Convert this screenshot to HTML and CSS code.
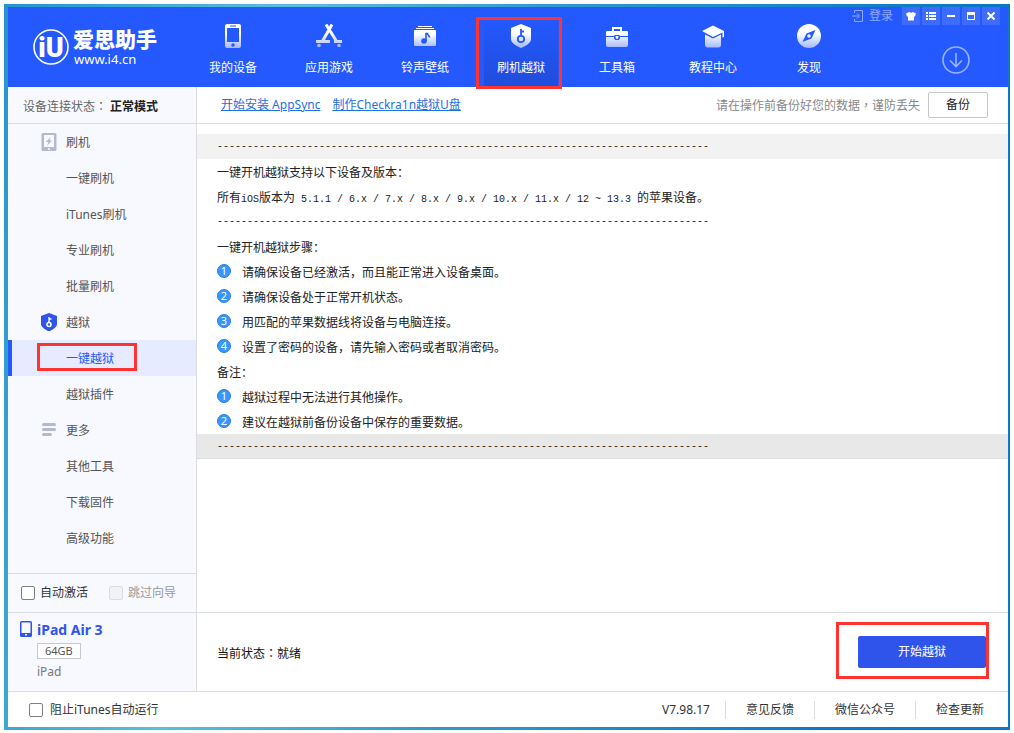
FILE: index.html
```html
<!DOCTYPE html>
<html lang="zh-CN">
<head>
<meta charset="utf-8">
<title>爱思助手</title>
<link rel="stylesheet" href="styles.css">
</head>
<body>
<svg class="defs" width="0" height="0" aria-hidden="true">
  <defs>
    <linearGradient id="fade" gradientUnits="userSpaceOnUse" x1="0" y1="0" x2="0" y2="24">
      <stop offset="0.4" stop-color="#fff"/><stop offset="1" stop-color="#a3b8ff"/>
    </linearGradient>
  </defs>
</svg>
<div class="window">
  <header class="header">
    <div class="brand">
      <svg class="brand-mark" width="36" height="36" viewBox="0 0 36 36" aria-hidden="true">
        <circle cx="18" cy="18" r="17" fill="none" stroke="#fff" stroke-width="1.6"/>
        <text x="18" y="28" text-anchor="middle" class="brand-letters">iU</text>
      </svg>
      <div class="brand-text">
        <span class="brand-name">爱思助手</span>
        <span class="brand-url">www.i4.cn</span>
      </div>
    </div>
    <nav class="tabs">
      <a class="tab" href="#"><svg width="24" height="24" viewBox="0 0 24 24"><path fill="url(#fade)" fill-rule="evenodd" d="M6 0h12a2 2 0 0 1 2 2v20a2 2 0 0 1-2 2H6a2 2 0 0 1-2-2V2a2 2 0 0 1 2-2zM6 4v14h12V4zM9 1.500h6v1H9zM12 19.200a1.800 1.800 0 1 0 0 3.600a1.800 1.800 0 0 0 0-3.600z"/></svg>我的设备</a>
      <a class="tab" href="#"><svg width="28" height="24" viewBox="0 0 28 24"><g fill="none" stroke="url(#fade)" stroke-width="3"><path d="M11 0.500 22 18M17 0.500 7 18"/><path d="M1 17.500h14M19 17.500h8" stroke-width="3.200"/></g><circle cx="4" cy="21.500" r="1.800" fill="#a3b8ff"/><circle cx="24" cy="21.500" r="1.800" fill="#a3b8ff"/></svg>应用游戏</a>
      <a class="tab" href="#"><svg width="24" height="24" viewBox="0 0 24 24"><path fill="#fff" d="M5 2h14v1H5zM3 4h18v1H3z"/><path fill="url(#fade)" d="M2 6h20a1 1 0 0 1 1 1v14a1 1 0 0 1-1 1H2a1 1 0 0 1-1-1V7a1 1 0 0 1 1-1z"/><circle cx="11" cy="17" r="2.800" fill="#2459ff"/><path d="M13 17V9.500h1.500c0 2 2 2 2 4" fill="none" stroke="#2459ff" stroke-width="1.600"/></svg>铃声壁纸</a>
      <a class="tab tab-active" href="#" aria-current="page"><svg width="24" height="24" viewBox="0 0 24 24"><path fill="url(#fade)" d="M12 0 22 4v11c0 4-5 7-10 9c-5-2-10-5-10-9V4z"/><circle cx="12" cy="15" r="3.200" fill="none" stroke="#2459ff" stroke-width="1.800"/><path d="M12 12V5M12 7.500h3" fill="none" stroke="#2459ff" stroke-width="1.800"/></svg>刷机越狱<span class="marker marker-tab"></span></a>
      <a class="tab" href="#"><svg width="24" height="24" viewBox="0 0 24 24"><path fill="none" stroke="#fff" stroke-width="2" d="M8 7V4h8v3"/><path fill="url(#fade)" d="M2 7h20a1 1 0 0 1 1 1v4H1V8a1 1 0 0 1 1-1zM1 13h8a3 3 0 0 0 6 0h8v8a2 2 0 0 1-2 2H3a2 2 0 0 1-2-2z"/><path d="M10 11.500v2a2 2 0 0 0 4 0v-2z" fill="#fff" stroke="#2459ff" stroke-width="1.200"/></svg>工具箱</a>
      <a class="tab" href="#"><svg width="24" height="24" viewBox="0 0 24 24"><path fill="#fff" d="M12 1.500 23 7v6l-1.500.5v-5L12 13 1 7z"/><path fill="url(#fade)" d="M4 10.500 12 14.500l8-4V21c0 1.500-1 2.500-2.500 2.500h-11C5 23.500 4 22.500 4 21z"/></svg>教程中心</a>
      <a class="tab" href="#"><svg width="24" height="24" viewBox="0 0 24 24"><circle cx="12" cy="12" r="12" fill="url(#fade)"/><path fill="#2459ff" fill-rule="evenodd" d="M18.500 6 14.500 14.500 5.500 18 9.500 9.500zM12 10.200a1.800 1.800 0 1 0 0 3.600a1.800 1.800 0 0 0 0-3.600z"/></svg>发现</a>
    </nav>
    <div class="header-tools">
      <div class="window-controls">
        <button class="login" type="button"><svg width="12" height="12" viewBox="0 0 12 12" fill="none" stroke="#8fa9ff"><path d="M2.500 3V.5h8v11h-8V9M0 6h7M5 3.500 7.500 6 5 8.500"/></svg>登录</button>
        <button class="control" type="button" aria-label="皮肤"><svg width="10" height="10" viewBox="0 0 10 10"><path fill="#fff" d="M3 1q2 1.500 4 0l3 1.500-1 3H8v4H2v-4H1L0 2.500z"/></svg></button>
        <button class="control" type="button" aria-label="菜单"><svg width="10" height="10" viewBox="0 0 10 10"><path fill="#fff" d="M0 1h2v2H0zM3 1h7v2H3zM0 4h2v2H0zM3 4h7v2H3zM0 7h2v2H0zM3 7h7v2H3z"/></svg></button>
        <button class="control" type="button" aria-label="最小化"><svg width="10" height="10" viewBox="0 0 10 10"><path fill="#fff" d="M1 4h8v2H1z"/></svg></button>
        <button class="control" type="button" aria-label="最大化"><svg width="10" height="10" viewBox="0 0 10 10"><path fill="#fff" fill-rule="evenodd" d="M1 1h8v8H1zM2 4v4h6V4z"/></svg></button>
        <button class="control" type="button" aria-label="关闭"><svg width="10" height="10" viewBox="0 0 10 10"><path stroke="#fff" stroke-width="2" d="M1.500 1.500l7 7M8.500 1.500l-7 7"/></svg></button>
      </div>
      <button class="downloads" type="button" aria-label="下载"><svg width="28" height="28" viewBox="0 0 28 28" fill="none" stroke="#9db3ff" stroke-width="1.600"><circle cx="14" cy="14" r="13"/><path d="M14 7v13M8 14.500l6 6 6-6"/></svg></button>
    </div>
  </header>

  <div class="body">
    <aside class="sidebar">
      <div class="link-state"><span>设备连接状态<span class="mid" lang="zh-TW">：</span></span><strong>正常模式</strong></div>
      <nav class="menu">
        <a class="group" href="#"><svg width="16" height="18" viewBox="0 0 16 18"><path fill="#b4b9d0" fill-rule="evenodd" d="M2 0h12a1.500 1.500 0 0 1 1.500 1.500v15A1.500 1.500 0 0 1 14 18H2a1.500 1.500 0 0 1-1.500-1.500v-15A1.500 1.500 0 0 1 2 0zM3 2v12h10V2zM7 15.200v1.600h2v-1.600z"/><path fill="#b4b9d0" d="M9.500 4 4.800 9h2.700L6 13l5-5.500H8.500z"/></svg><span>刷机</span></a>
        <a href="#"><span>一键刷机</span></a>
        <a href="#"><span>iTunes刷机</span></a>
        <a href="#"><span>专业刷机</span></a>
        <a href="#"><span>批量刷机</span></a>
        <a class="group" href="#"><svg width="16" height="18" viewBox="0 0 16 18"><path fill="#2f54eb" d="M8 0 16 3v8c0 3-4 5.500-8 7.500C4 16.500 0 14 0 11V3z"/><circle cx="8" cy="11.500" r="2" fill="none" stroke="#fff" stroke-width="1.600"/><path d="M8 10V4M8 6h2.500" fill="none" stroke="#fff" stroke-width="1.400"/></svg><span>越狱</span></a>
        <a class="selected" href="#" aria-current="page"><span>一键越狱</span><i class="marker marker-menu"></i></a>
        <a href="#"><span>越狱插件</span></a>
        <a class="group" href="#"><svg width="16" height="18" viewBox="0 0 16 18" stroke="#b4b9d0" stroke-width="3" stroke-linecap="round"><path d="M2.500 3.500h11M2.500 8.500h11M2.500 13.500h7"/></svg><span>更多</span></a>
        <a href="#"><span>其他工具</span></a>
        <a href="#"><span>下载固件</span></a>
        <a href="#"><span>高级功能</span></a>
      </nav>
      <div class="options">
        <label class="check"><input type="checkbox">自动激活</label>
        <label class="check check-off"><input type="checkbox" disabled>跳过向导</label>
      </div>
      <div class="device">
        <svg width="12" height="16" viewBox="0 0 12 16"><path fill="#2f54eb" fill-rule="evenodd" d="M1.500 0h9A1.500 1.500 0 0 1 12 1.500v13a1.500 1.500 0 0 1-1.500 1.500h-9A1.500 1.500 0 0 1 0 14.500v-13A1.500 1.500 0 0 1 1.500 0zM1.500 1.500V12h9V1.500zM5 13v1.500h2V13z"/></svg>
        <div class="device-info">
          <strong>iPad Air 3</strong>
          <span class="capacity">64GB</span>
          <span class="model">iPad</span>
        </div>
      </div>
    </aside>

    <main class="main">
      <div class="toolbar">
        <a href="#">开始安装 AppSync</a>
        <a href="#">制作Checkra1n越狱U盘</a>
        <span class="hint">请在操作前备份好您的数据<span class="mid" lang="zh-TW">，</span>谨防丢失</span>
        <button class="backup" type="button">备份</button>
      </div>
      <section class="guide">
        <p class="band half">----------------------------------------------------------------------------------</p>
        <p>一键开机越狱支持以下设备及版本：</p>
        <p>所有<span class="half">iOS</span>版本为<span class="half"> 5.1.1 / 6.x / 7.x / 8.x / 9.x / 10.x / 11.x / 12 ~ 13.3 </span>的苹果设备。</p>
        <p class="half">----------------------------------------------------------------------------------</p>
        <p>一键开机越狱步骤：</p>
        <p class="step"><b>1</b>请确保设备已经激活，而且能正常进入设备桌面。</p>
        <p class="step"><b>2</b>请确保设备处于正常开机状态。</p>
        <p class="step"><b>3</b>用匹配的苹果数据线将设备与电脑连接。</p>
        <p class="step"><b>4</b>设置了密码的设备，请先输入密码或者取消密码。</p>
        <p>备注：</p>
        <p class="step"><b>1</b>越狱过程中无法进行其他操作。</p>
        <p class="step"><b>2</b>建议在越狱前备份设备中保存的重要数据。</p>
        <p class="band band-end half">----------------------------------------------------------------------------------</p>
      </section>
      <div class="action">
        <span class="status">当前状态<span class="mid" lang="zh-TW">：</span>就绪</span>
        <div class="start-wrap">
          <button class="start" type="button">开始越狱</button>
          <span class="marker marker-start"></span>
        </div>
      </div>
    </main>
  </div>

  <footer class="footer">
    <label class="check"><input type="checkbox">阻止iTunes自动运行</label>
    <div class="footer-links">
      <span>V7.98.17</span>
      <a href="#">意见反馈</a>
      <a href="#">微信公众号</a>
      <a href="#">检查更新</a>
    </div>
  </footer>
</div>
</body>
</html>
```
FILE: styles.css
```css
* { box-sizing: border-box; }

body {
  margin: 0;
  height: 100vh;
  padding: 4px 4px 3px;
  background: #fff;
  color: #333;
  font: 12px/18px "Noto Sans", "Noto Sans CJK SC", sans-serif;
}

a { color: inherit; text-decoration: none; }
p { margin: 0; }
svg { flex: none; display: block; }
.defs { position: absolute; }
.mid { font-family: "Noto Sans CJK TC", sans-serif; }

button {
  margin: 0;
  padding: 0;
  border: 0;
  background: none;
  color: inherit;
  font: inherit;
}

.window {
  display: flex;
  flex-direction: column;
  height: 100%;
  padding: 3px 2px 3px 4px;
  background: linear-gradient(100deg, #2495cc 0%, #58bfdb 25%, #2f98cb 50%, #0a78c8 85%, #0a78d0 100%);
}

.header {
  flex: none;
  display: flex;
  height: 80px;
  background: #2459ff;
  color: #fff;
}

.brand {
  display: flex;
  align-items: center;
  gap: 4px;
  width: 188px;
  padding-left: 25px;
}
.brand-letters { fill: #fff; font: 900 27px Roboto, sans-serif; }
.brand-text { display: flex; flex-direction: column; padding-top: 2px; }
.brand-name { font-size: 21px; font-weight: 900; line-height: 22px; }
.brand-url { font-size: 13px; line-height: 18px; padding-left: 1px; }

.tabs { display: flex; gap: 22px; }
.tab {
  position: relative;
  display: flex;
  flex-direction: column;
  align-items: center;
  gap: 11px;
  width: 74px;
  padding-top: 17px;
}
.tab-active { background: linear-gradient(#2459ff 10%, #1f4ddb); }

.marker {
  position: absolute;
  border: 3px solid #ff3431;
  pointer-events: none;
}
.marker-tab { inset: 10px -4px -2px -8px; }
.marker-menu { inset: 3px 59px 5px 25px; }
.marker-start { inset: -14px -3px -11px -22px; }

.header-tools {
  flex: 1;
  display: flex;
  flex-direction: column;
  align-items: flex-end;
  gap: 21px;
}
.window-controls { display: flex; gap: 2px; padding-right: 8px; }
.login {
  display: flex;
  align-items: center;
  gap: 5px;
  margin-right: 7px;
  color: #8fa9ff;
}
.control {
  display: grid;
  place-items: center;
  width: 18px;
  height: 18px;
  background: #3d6cff;
}
.downloads { margin-right: 38px; }

.body { flex: 1; display: flex; min-height: 0; }

.sidebar {
  flex: none;
  display: flex;
  flex-direction: column;
  width: 189px;
  border-right: 1px solid #dadce0;
  background: #f8f9ff;
}
.link-state {
  height: 37px;
  padding: 10px 0 0 15px;
  border-bottom: 1px solid #dadce0;
  color: #666;
}
.link-state strong { margin-left: 3px; color: #222; }

.menu { flex: 1; color: #555; }
.menu a {
  position: relative;
  display: flex;
  align-items: center;
  height: 36px;
  padding-left: 58px;
}
.menu span { padding-top: 2px; }
.menu .group { gap: 9px; padding-left: 33px; }
.menu .selected {
  padding-left: 54px;
  border-left: 4px solid #2459ff;
  background: #e6ebff;
  color: #2459ff;
}

.options {
  display: flex;
  gap: 21px;
  align-items: center;
  height: 40px;
  padding-left: 13px;
  border: solid #dadce0;
  border-width: 1px 0;
}
.check { display: flex; align-items: center; gap: 5px; white-space: nowrap; }
.check input {
  appearance: none;
  width: 14px;
  height: 14px;
  margin: 0;
  border: 1px solid #808080;
  border-radius: 2px;
  background: #fff;
}
.check-off { color: #999; }
.check-off input { border-color: #dcdcdc; background: #f1f2f5; }

.device { display: flex; gap: 5px; height: 78px; padding: 8px 0 0 12px; }
.device-info { display: flex; flex-direction: column; align-items: flex-start; color: #777; }
.device-info strong { color: #2f54eb; font-size: 14px; }
.capacity {
  margin: 4px 0;
  padding: 0 7px;
  border: 1px solid #c8c8c8;
  background: #fff;
  color: #555;
  font-size: 11px;
  line-height: 14px;
}

.main {
  flex: 1;
  display: flex;
  flex-direction: column;
  min-width: 0;
  background: #fff;
}
.toolbar {
  flex: none;
  display: flex;
  align-items: center;
  gap: 12px;
  height: 37px;
  padding: 0 20px 0 24px;
  border-bottom: 1px solid #dadce0;
}
.toolbar a { color: #1f6fe5; text-decoration: underline; }
.hint { margin-left: auto; color: #888; }
.backup {
  width: 60px;
  height: 26px;
  margin-left: -4px;
  border: 1px solid #c8c8c8;
  border-radius: 2px;
  background: #fff;
  color: #222;
}

.guide {
  flex: 1;
  padding-top: 10px;
  font: 12px/25px "Noto Sans CJK SC", sans-serif;
  color: #222;
}
.guide p { height: 25px; padding-left: 20px; white-space: pre; }
.half { font-family: "Liberation Mono", monospace; font-size: 10px; }
.guide .band { background: #f2f2f2; }
.guide .band-end { background: #e8e8e8; border-bottom: 1px solid #dadce0; }
.guide .step { display: flex; gap: 11px; }
.step b {
  width: 14px;
  height: 14px;
  margin-top: 5px;
  border: 1px solid #2f80d8;
  border-radius: 50%;
  background: #3597ff;
  color: #fff;
  font: 11px/12px "Noto Sans", sans-serif;
  text-align: center;
}

.action {
  flex: none;
  display: flex;
  align-items: center;
  justify-content: space-between;
  height: 79px;
  padding: 0 22px 0 20px;
  border-top: 1px solid #dadce0;
  color: #111;
}
.status { padding-top: 2px; }
.start-wrap { position: relative; }
.start {
  display: block;
  width: 128px;
  height: 32px;
  border-radius: 2px;
  background: #2f54eb;
  color: #fff;
}

.footer {
  flex: none;
  display: flex;
  align-items: center;
  justify-content: space-between;
  height: 36px;
  padding: 0 24px 0 21px;
  border-top: 1px solid #dadce0;
  background: #fff;
}
.footer .check { gap: 7px; }
.footer-links { display: flex; }
.footer-links a { margin-left: 15px; padding-left: 20px; border-left: 1px solid #dadce0; }
.footer-links a + a { margin-left: 20px; }
```
